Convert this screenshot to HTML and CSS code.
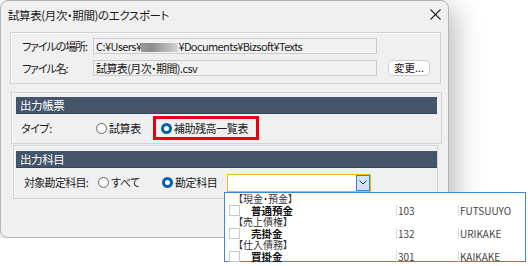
FILE: index.html
```html
<!DOCTYPE html>
<html lang="ja">
<head>
  <meta charset="UTF-8" />
  <title>試算表(月次・期間)のエクスポート</title>
  <link rel="stylesheet" href="styles.css">
</head>
<body>
  <div class="dialog">
    <div class="titlebar">
      <span class="title">試算表(月次・期間)のエクスポート</span>
      <svg class="close" width="11" height="11" viewBox="0 0 11 11">
        <path d="M0.5 0.5 L10.5 10.5 M10.5 0.5 L0.5 10.5" stroke="#222" stroke-width="1.1" fill="none"/>
      </svg>
    </div>

    <div class="group file-group">
      <div class="row">
        <span class="label">ファイルの場所:</span>
        <div class="field">C:¥Users¥<span class="blur"></span>¥Documents¥Bizsoft¥Texts</div>
      </div>
      <div class="row">
        <span class="label">ファイル名:</span>
        <div class="field">試算表(月次・期間).csv</div>
        <button class="btn">変更...</button>
      </div>
    </div>

    <div class="group report-group">
      <div class="group-head">出力帳票</div>
      <div class="row option-row">
        <span class="label type-label">タイプ:</span>
        <span class="radio"><i class="dot"></i>試算表</span>
        <span class="highlight">
          <span class="radio"><i class="dot on"></i>補助残高一覧表</span>
        </span>
      </div>
    </div>

    <div class="group account-group">
      <div class="group-head">出力科目</div>
      <div class="row option-row">
        <span class="label acct-label">対象勘定科目:</span>
        <span class="radio all"><i class="dot"></i>すべて</span>
        <span class="radio"><i class="dot on"></i>勘定科目</span>
        <div class="combo">
          <span class="combo-btn">
            <svg width="8" height="5" viewBox="0 0 8 5"><path d="M0.5 0.5 L4 4 L7.5 0.5" stroke="#333" fill="none"/></svg>
          </span>
        </div>
      </div>
    </div>
  </div>

  <div class="dropdown">
    <div class="cat">【現金・預金】</div>
    <div class="item"><i class="check"></i><span class="name">普通預金</span><span class="code">103</span><span class="kana">FUTSUUYO</span></div>
    <div class="cat">【売上債権】</div>
    <div class="item"><i class="check"></i><span class="name">売掛金</span><span class="code">132</span><span class="kana">URIKAKE</span></div>
    <div class="cat">【仕入債務】</div>
    <div class="item"><i class="check"></i><span class="name">買掛金</span><span class="code">301</span><span class="kana">KAIKAKE</span></div>
  </div>
</body>
</html>
```

FILE: styles.css
```css
body {
  margin: 0;
  background: #fff;
  font-family: "Noto Sans CJK JP", sans-serif;
  font-size: 11px;
  letter-spacing: -0.4px;
  color: #1a1a1a;
  font-feature-settings: "palt";
}
.dialog {
  width: 447px;
  height: 236px;
  background: #f0f0f0;
  border: 1px solid #b4b4b4;
  border-radius: 8px;
  box-shadow: 6px 8px 28px rgba(0, 0, 0, 0.28);
}
.titlebar {
  height: 27px;
  display: flex;
  align-items: center;
  justify-content: space-between;
  padding: 0 7px 0 7px;
}
.title {
  font-size: 11.5px;
}
.close {
  margin-top: -1px;
}
.group {
  border: 1px solid #d2d2d2;
  box-shadow: inset 1px 1px 0 #fafafa;
  box-sizing: border-box;
}
.file-group {
  margin: 4px 0 0 9px;
  width: 431px;
  height: 52px;
  padding: 5px 0 0 11px;
  display: flex;
  flex-direction: column;
  gap: 6px;
}
.row {
  display: flex;
  align-items: center;
  height: 16px;
}
.label {
  flex-shrink: 0;
  white-space: nowrap;
}
.file-group .label {
  width: 71px;
  letter-spacing: -1.1px;
}
.field {
  flex-shrink: 0;
  width: 284px;
  height: 16px;
  box-sizing: border-box;
  border: 1px solid #cbcbcb;
  background: #f2f2f2;
  padding: 0 2px;
  line-height: 14px;
  letter-spacing: -0.6px;
  white-space: nowrap;
  overflow: hidden;
}
.blur {
  display: inline-block;
  width: 37px;
  height: 9px;
  vertical-align: -1px;
  background: linear-gradient(90deg, #9a9a9a 0, #8c8c8c 30%, #a8a8a8 55%, #b8b8b8 75%, #d6d6d6 100%);
}
.btn {
  flex-shrink: 0;
  margin-left: 11px;
  width: 42px;
  height: 16px;
  padding: 0;
  font: inherit;
  font-size: 10.5px;
  line-height: 14px;
  color: #1a1a1a;
  background: #fdfdfd;
  border: 1px solid #cfcfcf;
  border-radius: 4px;
}
.report-group {
  margin: 8px 0 0 10px;
  width: 431px;
  height: 52px;
  padding: 4px 4px 0 4px;
}
.account-group {
  margin: 1px 0 0 12px;
  width: 425px;
  height: 54px;
  padding: 5px 0 0 2px;
}
.group-head {
  height: 17px;
  background: #44546a;
  border-bottom: 1px solid #34445a;
  box-sizing: border-box;
  color: #fff;
  font-size: 11.5px;
  line-height: 16px;
  padding-left: 4px;
}
.option-row {
  height: 28px;
}
.type-label {
  padding-left: 5px;
  width: 75px;
}
.acct-label {
  padding-left: 8px;
  width: 74px;
  letter-spacing: -0.7px;
}
.radio {
  display: inline-flex;
  align-items: center;
  gap: 2px;
  white-space: nowrap;
}
.dot {
  width: 11px;
  height: 11px;
  box-sizing: border-box;
  border-radius: 50%;
  border: 1px solid #6a6a6a;
  background: #fafafa;
}
.dot.on {
  border: 3px solid #0063b1;
  background: #fff;
}
.highlight {
  margin-left: 12px;
  height: 24px;
  box-sizing: border-box;
  border: 3px solid #e60012;
  padding: 0 8px 0 5px;
  display: inline-flex;
  align-items: center;
}
.radio.all {
  width: 64px;
}
.combo {
  margin-left: 10px;
  width: 144px;
  height: 18px;
  box-sizing: border-box;
  border: 1px solid #efb81c;
  background: #fff;
  display: flex;
  justify-content: flex-end;
  margin-top: 1px;
}
.combo-btn {
  width: 14px;
  height: 16px;
  box-sizing: border-box;
  border: 1px solid #3c84c4;
  background: #cde6f7;
  display: flex;
  align-items: center;
  justify-content: center;
}
.dropdown {
  position: absolute;
  left: 224px;
  top: 192px;
  width: 302px;
  height: 70px;
  box-sizing: border-box;
  border: 1px solid #3a8ad8;
  background: #fff;
  font-size: 10.5px;
  line-height: 11px;
  letter-spacing: 0;
}
.cat {
  height: 11px;
  padding-left: 13px;
  font-size: 10px;
  color: #333;
  white-space: nowrap;
}
.item {
  height: 12px;
  display: flex;
  align-items: center;
  white-space: nowrap;
}
.check {
  flex-shrink: 0;
  width: 11px;
  height: 11px;
  box-sizing: border-box;
  border: 1px solid #c8c8c8;
  margin-left: 4px;
}
.name {
  width: 156px;
  padding-left: 11px;
  box-sizing: border-box;
  font-weight: bold;
  color: #111;
}
.code,
.kana {
  border-left: 1px solid #dcdcdc;
  height: 11px;
  padding-left: 1px;
  color: #444;
  font-size: 10px;
}
.code {
  width: 60px;
}
```
